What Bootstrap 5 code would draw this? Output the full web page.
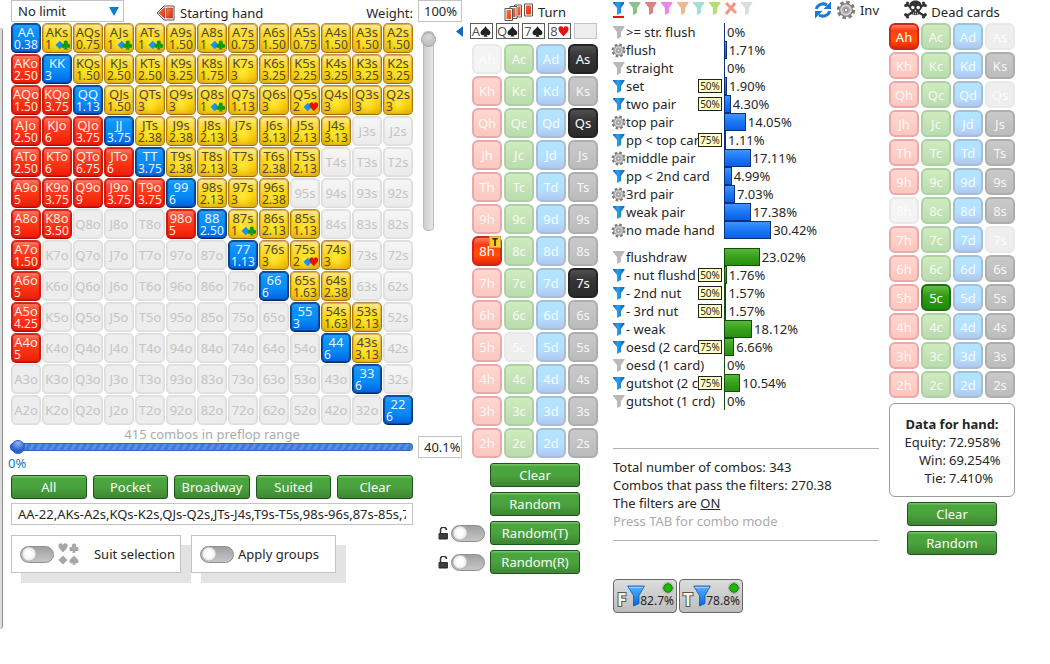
<!DOCTYPE html>
<html lang="en">
<head>
<meta charset="utf-8">
<meta name="viewport" content="width=device-width, initial-scale=1">
<title>Range and filter view</title>
<link href="https://cdn.jsdelivr.net/npm/bootstrap@5.3.0/dist/css/bootstrap.min.css" rel="stylesheet">
<style>
body{font-family:"Noto Sans","Open Sans",sans-serif;font-size:13px;line-height:18px;color:#262626;background:#fff}
button,input,select{font-family:inherit;color:inherit}
.layout{display:grid;grid-template-columns:3px minmax(0,449fr) minmax(0,126fr) minmax(0,271fr) minmax(0,126fr);column-gap:10px;padding-right:35px;min-width:1000px}
.range-col{margin-left:-2px}
.filter-col{padding-left:5px}
.splitter{height:601px;margin-top:28px;background:#dcdcdc;border-right:1px solid #8f8f8f;border-radius:0 4px 4px 0}
.bar-top{height:23px}
.side-col{width:44px;margin-bottom:-4px}
.side-wrap{gap:5px}
.field{border:1px solid #c3c3c3;background:#fff;height:22px;padding:0 6px;border-radius:0;outline:0;font-size:13px}
.side-col .field{width:44px;padding:0 1px 0 5px}
.pick{appearance:none;width:113px;background:linear-gradient(#fff,#fff);line-height:20px}
.pick-box{position:relative}
.pick-box svg{position:absolute;right:4px;top:7px;pointer-events:none}

.hands{display:grid;grid-template-columns:repeat(13,minmax(0,1fr));gap:1px}
.hand,.pip{border:1px solid #ddd;border-radius:5px;padding:0;font-size:13px;overflow:hidden;white-space:nowrap}
.hand{height:30px;line-height:14px;display:flex;flex-direction:column;justify-content:center;text-align:center;color:#c4c4c4;background:linear-gradient(#f6f6f6,#ebebeb);box-shadow:inset 0 0 0 1px #e2e2e2}
.hand.offsuit{background:#ededed}
.hand .qty{text-align:left;font-size:12px;height:13px;padding-left:2px;display:flex;align-items:center}
.hand .qty svg{margin-left:3px}
.hand .qty svg + svg{margin-left:-3px}
.hand.on.suited{color:#4f4a35;border-color:#b98a4a #a8790f #a06a00;background:radial-gradient(ellipse at 50% 60%,#ffe93a 0,#ffd60a66 50%,#ffd60a00 80%),linear-gradient(#fff0b4 0,#fde15c 22%,#fbcf07 60%,#dca600 100%);box-shadow:inset 0 0 1px 1px #d9ae3c}
.hand.on.pair{color:#e6f2ff;border-color:#0a4d8e #073a78 #04265e;background:linear-gradient(#3ba4fa 0,#0f93fa 20%,#078af5 60%,#0560e2 100%);box-shadow:inset 0 0 1px 1px #064a9c}
.hand.on.offsuit{color:#ffe9e4;border-color:#d0322c #c41d14 #a90f08;background:linear-gradient(#ff8a74 0,#fb4b2e 22%,#fb3212 60%,#ee1c08 100%);box-shadow:inset 0 0 1px 1px #d3160c}

.cards{display:grid;grid-template-columns:repeat(4,minmax(0,1fr));gap:2px}
.pip{border-width:2px;border-radius:6px;height:30px;line-height:24px;color:#fffd;position:relative;overflow:visible}
.cards.flat .pip{height:27px;line-height:22px}
.pip.h{border-color:#eca9a9;background:linear-gradient(#ffd6cf,#fbc7bf)}
.pip.c{border-color:#add0a4;background:linear-gradient(#ceebbd,#bbdcb0)}
.pip.d{border-color:#a5bfd9;background:linear-gradient(#b2e4ff 0,#b4e0ff 60%,#b0c6ee)}
.pip.s{border-color:#adadad;background:linear-gradient(#c9c9c9,#bcbcbc)}
.pip.none{border-color:#e9e9e9;background:#eee}
.pip.none.h{background:#f4f4f4}
.pip.on{color:#fff}
.pip.on.h{border-color:#cf2620;background:linear-gradient(#ff7d5b 0,#fc3c14 25%,#ff5200 65%,#ec2008)}
.pip.on.c{border-color:#1f6e12;background:linear-gradient(#63bb45,#2f9c12 45%,#1f8c08)}
.pip.on.s{border-color:#242424;background:linear-gradient(#505050,#353535 40%,#2b2b2b)}
.turn-tag{position:absolute;right:-1px;top:-2px;width:12px;height:12px;line-height:11px;font-size:10px;font-weight:700;color:#222;background:#fecb2b;border:1px solid #d9a42a}

.act{height:24px;border:1px solid #1d561a;border-radius:3px;color:#f6fff4;font-size:13px;line-height:21px;padding:0;background:linear-gradient(#7cc96a 0,#4ba63f 12%,#4aa33d 50%,#3f8434 100%)}
.acts{display:grid;grid-template-columns:repeat(5,minmax(0,1fr));column-gap:6px;margin-top:3px}
.stack{gap:5px;margin-top:5px}
.stack .act{width:90px;flex:none}
.stack.with-locks{padding-right:18px}
.stack .flip{margin:0 5px 0 2px}

.h-slider{appearance:none;display:block;width:calc(100% + 1px);height:14px;margin:-3px 0 0 -1px;background:none}
.h-slider::-webkit-slider-runnable-track{height:8px;border:1px solid #2c68bb;border-radius:3px;background:repeating-linear-gradient(120deg,#5592e4 0 3px,#3f7bd6 3px 6px)}
.h-slider::-webkit-slider-thumb{appearance:none;width:14px;height:14px;margin-top:-4px;border-radius:50%;border:1px solid #2758bd;background:radial-gradient(circle at 50% 15%,#8fb9f4,#2463d2 65%)}
.v-slider{appearance:none;writing-mode:vertical-lr;direction:rtl;display:block;width:16px;height:200px;margin:9px 0 0 2px;background:none}
.v-slider::-webkit-slider-runnable-track{width:11px;border:1px solid #bdbdbd;border-radius:4px;background:linear-gradient(90deg,#cfcfcf,#e6e6e6)}
.v-slider::-webkit-slider-thumb{appearance:none;width:15px;height:15px;margin-left:-3px;border-radius:50%;border:1px solid #a0a0a0;background:radial-gradient(circle at 50% 30%,#d6d6d6,#b8b8b8)}
.low{color:#0a7bc4;margin-left:-3px}
.faint{color:#ababab}
.range-foot{padding-right:49px}
.switches{display:grid;grid-template-columns:minmax(0,170fr) minmax(0,145fr);gap:10px;margin:10px 77px 0 0}
.boxed{border:1px solid #c3c3c3;background:#fff;height:38px;box-shadow:10px 10px 0 #e3e3e3;white-space:nowrap}
.boxed.wider{padding-right:5px!important}
.flip{appearance:none;flex:none;width:34px;height:17px;margin:0;border-radius:9px;border:1px solid #8e8e8e;background:radial-gradient(circle at 8px 7px,#fff 0 3px,#ececec 6px,#b5b5b5 7px,#0000 8px),linear-gradient(#a0a0a0,#c6c6c6)}

.board{gap:3px;width:128px;margin-left:6px}
.deck-turn{margin-top:4px}
.slot{width:23px;height:16px;flex:none;border:1px solid #5c5c5c;line-height:13px;color:#555}
.slot.empty{border-color:#c4c4c4;background:#eee}
.line-item{height:18px;display:grid;grid-template-columns:111px minmax(0,1fr)}
.cap{display:flex;min-width:0;padding-right:2px}
.cap svg{flex:none;width:16px;height:17px;margin:1px -3px 0 0}
.cap .gear{margin:1px -3px 0 -2px;width:18px}
.cap .txt{flex:1 1 0;min-width:0;overflow:hidden;white-space:nowrap}
.quota{flex:none;margin-top:2px;width:24px;height:14px;border:1px solid #222;background:#ffffc4;font-size:10px;line-height:12px;text-align:center}
.track{display:flex;min-width:0;white-space:nowrap}
.meter-bar{flex:none;height:18px;border:1px solid #0b2f7a;background:linear-gradient(#3f95ff,#1a78f5 50%,#0b5fe6)}
.meter-bar.nil{border-right:0}
.green .meter-bar{border-color:#134d0c;background:linear-gradient(#55b83a,#37a11b 50%,#2a8f10)}
.green{margin-top:9px}
.track .num{padding-left:2px}
.palette .sel{border-bottom:2px solid #e11;margin-right:5px}
.rule{border-top:1px solid #b1b1b1}
.summary{margin-top:38px;padding:9px 0 10px}
.stages{padding-top:38px;gap:2px}
.stage{width:64px;height:34px;padding:0;border:1px solid #686868;border-radius:4px;background:linear-gradient(#dcdcdc,#bdbdbd);position:relative;display:block}
.stage svg{display:block}
.stage .share{position:absolute;right:2px;bottom:4px;font-size:12px;line-height:15px}
.plain{border:0;background:none;padding:0;line-height:18px}
.databox{border:1px solid #9b9b9b;border-radius:6px;height:94px;padding-top:11px;margin-top:5px}
.databox dl{display:grid;grid-template-columns:56px 1fr;column-gap:3px}
.databox dt{font-weight:400;text-align:right}
</style>
</head>
<body>
<svg width="0" height="0" class="position-absolute" aria-hidden="true">
<defs>
<linearGradient id="gb"><stop offset="0" stop-color="#0a68b4"/><stop offset=".4" stop-color="#2ba0ec"/><stop offset="1" stop-color="#0868b0"/></linearGradient>
<linearGradient id="gr" x2="1" y2="1"><stop stop-color="#ff7d4c"/><stop offset="1" stop-color="#df2600"/></linearGradient>
<linearGradient id="gf" y2="1" x2="0"><stop stop-color="#5db2ff"/><stop offset="1" stop-color="#0467df"/></linearGradient>
<symbol id="funnel" viewBox="0 0 16 17"><path d="M0 2h11.500v1L8 8v5l-4 2V8L0 3z"/></symbol>
<symbol id="gear-shape" viewBox="-8 -8 16 16"><circle r="6" fill="none" stroke="#7d7d7d" stroke-width="2.800" stroke-dasharray="2.700 2.010"/><circle r="5.100" fill="#d4d4d4" stroke="#858585"/><circle r="2.700" fill="#b4b4b4" stroke="#999" stroke-width=".6"/><circle r="1.400" fill="#fff" stroke="#666" stroke-width=".6"/></symbol>
<symbol id="sp-h" viewBox="0 0 10 10"><path d="M5 9.500C3 7 .5 5.500 .5 3A2.300 2.300 0 0 1 5 2a2.300 2.300 0 0 1 4.500 1C9.500 5.500 7 7 5 9.500z"/></symbol>
<symbol id="sp-d" viewBox="0 0 10 10"><path d="M5 .5 9.500 5 5 9.500.5 5z"/></symbol>
<symbol id="sp-c" viewBox="0 0 10 10"><circle cx="5" cy="2.600" r="2.200"/><circle cx="2.500" cy="6" r="2.200"/><circle cx="7.500" cy="6" r="2.200"/><path d="M4.300 4h1.400l.3 4 1 1.700H3L4 8z"/></symbol>
<symbol id="sp-s" viewBox="0 0 10 10"><path d="M5 .3C6.500 3 9.500 4 9.500 6.200a2 2 0 0 1-3.900.8l1.200 2.700H3.200L4.400 7a2 2 0 0 1-3.900-.8C.5 4 3.500 3 5 .3z"/></symbol>
<symbol id="lock" viewBox="0 0 11 13"><path d="M2.500 6V3.500a3 3 0 0 1 6-.5" fill="none" stroke="#333" stroke-width="1.500"/><rect x=".5" y="6" width="9.500" height="6.500" rx="1" fill="#2d2d2d"/><path d="M1 8h8.500M1 10h8.500" stroke="#666" stroke-width=".6"/></symbol>
<symbol id="bigfunnel" viewBox="0 0 18 22"><path d="M.7 1h16.600l-5.300 9.500v8L6.500 21V10.500z" fill="url(#gf)" stroke="#0a54a8" stroke-width=".8"/><path d="M2 2.500h14" stroke="#9fd0ff"/></symbol>
</defs>
</svg>

<main class="layout">
<div class="splitter"></div>

<section class="range-col" aria-label="Starting hand range">
  <div class="d-flex side-wrap">
    <div class="flex-grow-1">
      <div class="bar-top d-flex align-items-start">
        <div class="pick-box"><select class="field pick" aria-label="Limit"><option>No limit</option></select>
        <svg width="11" height="9"><path d="M0 0h10L5 9z" fill="#0a80c8"/></svg></div>
        <div class="d-flex align-items-center flex-grow-1 ps-4 pt-1">
          <svg class="ms-2 me-1" width="20" height="16" viewBox="0 0 20 16"><path d="M1 8 8 1h10v14H8z" fill="#fff" stroke="#555"/><path d="M2.500 8 9 2.500v11z" fill="url(#gr)" stroke="#a33" stroke-width=".5"/><path d="M10.500 3h6v10h-6z" fill="url(#gr)" stroke="#9a2b18" stroke-width=".6"/></svg>
          <span>Starting hand</span>
          <label class="ms-auto" for="weight">Weight:</label>
        </div>
      </div>
      <div class="hands" id="hands"></div>
      <div class="text-center faint">415 combos in preflop range</div>
      <input class="h-slider" type="range" value="0" aria-label="Range percentage">
    </div>
    <div class="side-col d-flex flex-column">
      <input class="field" id="weight" value="100%">
      <input class="v-slider" type="range" value="100" aria-label="Weight">
      <input class="field mt-auto" value="40.1%" aria-label="Range share">
    </div>
  </div>
  <div class="range-foot">
    <div class="low">0%</div>
    <div class="acts">
      <button class="act">All</button><button class="act">Pocket</button><button class="act">Broadway</button><button class="act">Suited</button><button class="act">Clear</button>
    </div>
    <input class="field w-100 mt-1 d-block" aria-label="Range text" value="AA-22,AKs-A2s,KQs-K2s,QJs-Q2s,JTs-J4s,T9s-T5s,98s-96s,87s-85s,76s-74s,65s-64s,54s-53s,43s">
    <div class="switches">
      <div class="boxed wider d-flex align-items-center px-2">
        <input class="flip" type="checkbox" role="switch" id="suitsel">
        <svg class="ms-1" width="22" height="22" fill="#a6a6a6" aria-hidden="true"><use href="#sp-h" width="10" height="10"/><use href="#sp-c" x="11" width="10" height="10"/><use href="#sp-d" y="12" width="10" height="10"/><use href="#sp-s" x="11" y="12" width="10" height="10"/></svg>
        <label class="ms-auto" for="suitsel">Suit selection</label>
      </div>
      <div class="boxed d-flex align-items-center px-2">
        <input class="flip" type="checkbox" role="switch" id="groups">
        <label class="ms-1" for="groups">Apply groups</label>
      </div>
    </div>
  </div>
</section>

<section aria-label="Board">
  <div class="bar-top d-flex align-items-center justify-content-center">
    <svg width="30" height="18" viewBox="0 0 30 18"><g fill="#fff" stroke="#555"><path d="M20.500 1h8v12h-8z"/><path d="M10.500 2h7v12h-7z"/><path d="M6 3.500h7v12H6z"/><path d="M1 5.500h7.500v12H1z"/></g><path d="M22 2.500h5v9h-5zM12 3.500h4.500v9H14v-9zM7.500 5h4v9H9V5zM2.500 7H7v9H2.500z" fill="url(#gr)"/></svg>
    <span class="ms-1">Turn</span>
  </div>
  <div class="d-flex justify-content-end">
    <svg class="flex-shrink-0" width="8" height="17"><path d="M0 8.500 7 3v11z" fill="#1668b8"/></svg>
    <div class="board d-flex flex-shrink-0" id="board"></div>
  </div>
  <div class="cards deck-turn" id="boardcards"></div>
  <div class="stack with-locks d-flex flex-column align-items-end">
    <button class="act">Clear</button>
    <button class="act">Random</button>
    <div class="d-flex align-items-center justify-content-end"><svg class="flex-shrink-0" width="11" height="13"><use href="#lock"/></svg><input class="flip" type="checkbox" role="switch" aria-label="Lock turn"><button class="act">Random(T)</button></div>
    <div class="d-flex align-items-center justify-content-end"><svg class="flex-shrink-0" width="11" height="13"><use href="#lock"/></svg><input class="flip" type="checkbox" role="switch" aria-label="Lock river"><button class="act">Random(R)</button></div>
  </div>
</section>

<section class="filter-col" aria-label="Filters">
  <div class="bar-top d-flex align-items-start">
    <div class="d-flex palette" id="colors"></div>
    <div class="ms-auto d-flex align-items-center">
      <svg width="18" height="20" viewBox="0 0 18 18"><g fill="none" stroke="#1d79cf" stroke-width="3"><path d="M2.300 8A7 6.500 0 0 1 13 4"/><path d="M15.700 10A7 6.500 0 0 1 5 14"/></g><path d="M17 .5V8H9.500zM1 17.500V10h7.500z" fill="#1d79cf"/></svg>
      <svg class="ms-1" width="20" height="20"><use href="#gear-shape"/></svg>
      <button class="plain ms-1">Inv</button>
    </div>
  </div>
  <div id="made"></div>
  <div class="green" id="draws"></div>
  <div class="rule summary">
    <div>Total number of combos: 343</div>
    <div>Combos that pass the filters: 270.38</div>
    <div>The filters are <a href="#" class="text-reset">ON</a></div>
    <div class="faint">Press TAB for combo mode</div>
  </div>
  <div class="rule stages d-flex" id="stages"></div>
</section>

<section aria-label="Dead cards">
  <div class="bar-top d-flex align-items-start justify-content-center">
    <svg width="23" height="19" viewBox="0 0 23 19"><g stroke="#333" stroke-width="2.200" stroke-linecap="round"><path d="M2.500 4.500 20.500 16M20.500 4.500 2.500 16"/></g><g fill="#333"><circle cx="1.700" cy="5.500" r="1.600"/><circle cx="3.500" cy="3" r="1.600"/><circle cx="21.300" cy="5.500" r="1.600"/><circle cx="19.500" cy="3" r="1.600"/><circle cx="1.700" cy="14.700" r="1.600"/><circle cx="3.500" cy="17" r="1.600"/><circle cx="21.300" cy="14.700" r="1.600"/><circle cx="19.500" cy="17" r="1.600"/><path d="M11.500.5c4 0 6.500 2.600 6.500 6 0 2-1 3.500-2.500 4.300V14c-1 1.500-7 1.500-8 0v-3.200C6 10 5 8.500 5 6.500c0-3.400 2.500-6 6.500-6z"/></g><g fill="#fff"><circle cx="8.800" cy="7.500" r="1.700"/><circle cx="14.200" cy="7.500" r="1.700"/><path d="m11.500 9.500 1 1.700h-2z"/></g><path d="M9.500 12.500v2M11.500 12.700v2M13.500 12.500v2" stroke="#fff" stroke-width=".7"/></svg>
    <span class="ms-1 pt-1 lh-sm">Dead cards</span>
  </div>
  <div class="cards flat" id="deadcards"></div>
  <div class="databox">
    <div class="text-center fw-bold">Data for hand:</div>
    <dl class="m-0"><dt>Equity:</dt><dd class="m-0">72.958%</dd><dt>Win:</dt><dd class="m-0">69.254%</dd><dt>Tie:</dt><dd class="m-0">7.410%</dd></dl>
  </div>
  <div class="stack d-flex flex-column align-items-center">
    <button class="act">Clear</button>
    <button class="act">Random</button>
  </div>
</section>
</main>

<script>
const ranks = "AKQJT98765432".split("");
const suitColor = {d:"#1593f5", c:"#0a9a10", h:"#e8100c", s:"#222"};
const glyph = (s, size) => `<svg width="${size}" height="${size}" fill="${suitColor[s]}"><use href="#sp-${s}"/></svg>`;
const weights = [
 "0.38 1dc 0.75 1dc 1dc 1.50 1dc 0.75 1.50 0.75 1.50 1.50 1.50",
 "2.50 3 1.50 2.50 2.50 3.25 1.75 3 3.25 2.25 3.25 3.25 3.25",
 "1.50 3.75 1.13 1.50 3 3 1dc 1.13 3 2dh 3 3 3",
 "2.50 6 3.75 3.75 2.38 2.38 2.13 3 3.13 2.13 3.13 - -",
 "2.50 6 6.75 6 3.75 2.38 2.13 3 2.38 2.13 - - -",
 "5 3.75 9 3.75 3.75 6 2.13 3 2.38 - - - -",
 "3 3.50 - - - 5 2.50 1dc 2.13 1.13 - - -",
 "1.50 - - - - - - 1.13 3 2dh 3 - -",
 "5 - - - - - - - 6 1.63 2.38 - -",
 "4.25 - - - - - - - - 3 1.63 2.13 -",
 "5 - - - - - - - - - 6 3.13 -",
 "- - - - - - - - - - - 6 -",
 "- - - - - - - - - - - - 6"
];
hands.innerHTML = weights.map((row, r) => row.split(" ").map((w, c) => {
  const kind = r === c ? "pair" : c > r ? "suited" : "offsuit";
  const name = kind === "pair" ? ranks[r] + ranks[r] : kind === "suited" ? ranks[r] + ranks[c] + "s" : ranks[c] + ranks[r] + "o";
  if (w === "-") return `<button class="hand ${kind}"><span>${name}</span></button>`;
  const suits = w.replace(/[\d.]/g, "").split("");
  return `<button class="hand on ${kind}"><span>${name}</span><span class="qty">${w.replace(/[a-z]/g, "")}${suits.map(s => glyph(s, 10)).join("")}</span></button>`;
}).join("")).join("");

const deck = (el, on, none, tag) => {
  el.innerHTML = ranks.map(r => ["h", "c", "d", "s"].map(s => {
    const k = r + s, state = on.includes(k) ? "on" : none.includes(k) ? "none" : "";
    return `<button class="pip ${s} ${state}">${k}${k === tag ? '<span class="turn-tag">T</span>' : ""}</button>`;
  }).join("")).join("");
};
deck(boardcards, ["As", "Qs", "7s", "8h"], ["Ah", "5c"], "8h");
deck(deadcards, ["Ah", "5c"], ["As", "Qs", "8h", "7s"]);

board.innerHTML = ["As", "Qs", "7s", "8h"].map(k => `<div class="slot d-flex align-items-center justify-content-center">${k[0]}${glyph(k[1], 11)}</div>`).join("") + '<div class="slot empty"></div>';

const funnel = (fill) => `<svg width="16" height="17" fill="${fill}"><use href="#funnel" width="16" height="17"/></svg>`;
colors.innerHTML = `<svg width="11" height="18" class="sel" fill="url(#gb)"><use href="#funnel" width="16" height="17"/></svg>` + ["#82c48a", "#dc8186", "#ec86ee", "#eeb790", "#a3dedb", "#b4de70"].map(c => funnel(c)).join("")
  + '<svg width="16" height="17"><path d="m1 3 10 10M10 3 1 14" stroke="#fa9383" stroke-width="3"/></svg>' + funnel("#dcdcdc");

const icons = {g: funnel("#b9b9b9"), b: funnel("url(#gb)"), o: '<svg class="gear"><use href="#gear-shape" y="1" width="15" height="15"/></svg>'};
const list = (el, rows) => {
  el.innerHTML = rows.map(([icon, name, pct, quota]) => `<div class="line-item"><div class="cap">${icons[icon]}<span class="txt">${name}</span>${quota ? `<span class="quota">${quota}%</span>` : ""}</div><div class="track"><div class="meter-bar${+pct ? "" : " nil"}" style="width:${+pct}%"></div><span class="num">${pct}%</span></div></div>`).join("");
};
list(made, [["g","&gt;= str. flush","0"],["o","flush","1.71"],["g","straight","0"],["b","set","1.90",50],["b","two pair","4.30",50],["o","top pair","14.05"],["b","pp &lt; top card","1.11",75],["o","middle pair","17.11"],["b","pp &lt; 2nd card","4.99"],["o","3rd pair","7.03"],["b","weak pair","17.38"],["o","no made hand","30.42"]]);
list(draws, [["g","flushdraw","23.02"],["b","- nut flushd","1.76",50],["b","- 2nd nut","1.57",50],["b","- 3rd nut","1.57",50],["b","- weak","18.12"],["b","oesd (2 card)","6.66",75],["g","oesd (1 card)","0"],["b","gutshot (2 crd)","10.54",75],["g","gutshot (1 crd)","0"]]);

stages.innerHTML = [["F","82.7"],["T","78.8"]].map(([l, p]) => `<button class="stage"><svg width="62" height="32"><text x="3" y="26" font-size="17" font-weight="700" fill="#fff3dc" stroke="#555" stroke-width="2" paint-order="stroke">${l}</text><use href="#bigfunnel" x="13" y="5" width="18" height="22"/><circle cx="54" cy="8" r="5.500" fill="#e8e8e8" stroke="#aaa"/><circle cx="54" cy="8" r="4.300" fill="#1db805" stroke="#137204"/></svg><span class="share">${p}%</span></button>`).join("");
</script>
<script src="https://cdn.jsdelivr.net/npm/bootstrap@5.3.0/dist/js/bootstrap.bundle.min.js"></script>
</body>
</html>
